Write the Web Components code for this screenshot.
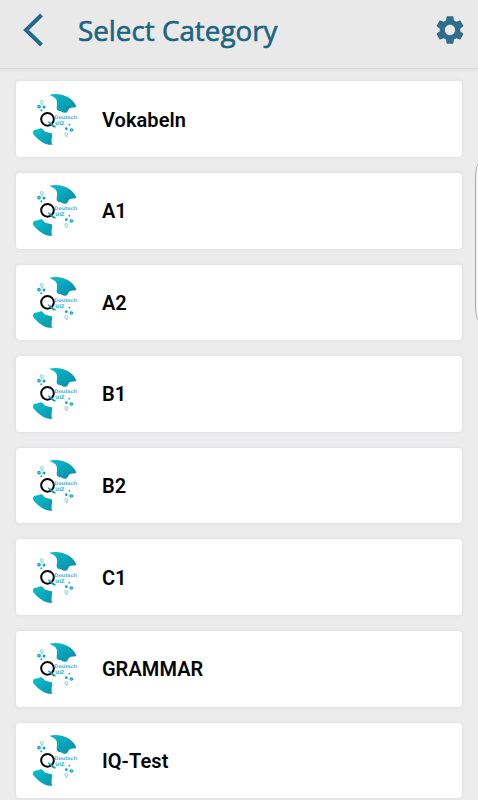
<!DOCTYPE html>
<html lang="de">
<head>
<meta charset="utf-8">
<title>Select Category</title>
<style>
html,body{margin:0;height:100%;overflow:hidden;background:#ececec}
</style>
</head>
<body>
<quiz-screen></quiz-screen>
<script>
const define = (name, html) => {
  const t = document.createElement('template');
  t.innerHTML = html;
  customElements.define(name, class extends HTMLElement {
    constructor() {
      super();
      this.attachShadow({ mode: 'open' }).append(t.content.cloneNode(true));
    }
  });
};

define('quiz-logo', `
<style>
:host{display:block;width:60px;height:65px;flex:none}
svg{display:block}
text{font-family:Roboto,sans-serif;text-rendering:geometricPrecision}
</style>
<svg width="60" height="65" viewBox="0 0 180 195">
  <defs>
    <linearGradient id="top" x1="0" y1="0" x2="1" y2="1"><stop offset="0" stop-color="#0cc0cc"/><stop offset="1" stop-color="#0888a6"/></linearGradient>
    <linearGradient id="low" x1="0" y1="0" x2="1" y2="1"><stop offset="0" stop-color="#08c2cb"/><stop offset="1" stop-color="#0a93ad"/></linearGradient>
  </defs>
  <path fill="url(#top)" d="M73 26C91 21 116 24 132 35C145 44 152 54 154 62C146 66 139 63 134 67C127 72 130 80 121 80C112 81 108 73 105 75C99 76 94 71 95 64C96 56 98 46 93 39C89 32 80 31 73 26Z"/>
  <path fill="url(#low)" d="M24 139C25 129 34 132 41 129C49 124 54 128 57 134C62 139 71 138 80 142C84 148 79 157 80 163C80 169 78 172 83 176C62 178 45 165 35 155C27 148 23 144 24 139Z"/>
  <g fill="#0ba5b7">
    <circle cx="42" cy="62" r="5.5"/><circle cx="57" cy="63" r="4.5"/><circle cx="49" cy="73" r="3"/>
    <circle cx="133" cy="116" r="2.5"/><circle cx="124" cy="128" r="4"/><circle cx="139" cy="132" r="5.5"/>
  </g>
  <g fill="#fff"><circle cx="42" cy="62" r="1.5"/><circle cx="139" cy="132" r="1.5"/></g>
  <g fill="none" stroke="#4ebfcb" stroke-width="2">
    <circle cx="50" cy="48" r="4.5"/><path d="M48 55h7M122 151h6"/><circle cx="124" cy="144" r="4.5"/>
  </g>
  <circle cx="67.500" cy="100" r="19" fill="none" stroke="#050505" stroke-width="6"/>
  <path d="M69 107L79 112L92 123L85 123L76 115Z" fill="#079bb4" stroke="#079bb4" stroke-width="2"/>
  <text x="88" y="97.500" font-weight="500" font-size="15" fill="#35a5e4" textLength="69" lengthAdjust="spacingAndGlyphs">Deutsch</text>
  <text x="91" y="116" font-weight="600" font-size="14.500" fill="#12a4b5" textLength="27" lengthAdjust="spacingAndGlyphs">UIZ</text>
</svg>`);

define('quiz-card', `
<style>
:host{display:flex;align-items:center;box-sizing:border-box;height:75.670px;padding:0 8.500px;background:#fff;border-radius:4px;
 box-shadow:0 0 3px 1px #dfe0e5;font:600 20px/24px Roboto,sans-serif;color:#050505}
quiz-logo{margin-top:-2px}
.label{margin-left:17px;padding-top:1px;letter-spacing:.08px}
</style>
<quiz-logo></quiz-logo><div class="label"><slot></slot></div>`);

define('quiz-header', `
<style>
:host{display:flex;align-items:center;box-sizing:border-box;height:69px;padding:0 14px 8px 23px;background:#e9e9e9;
 border-bottom:1px solid #dadada;box-shadow:0 1px 2px #dfdfdf;color:#1b6580}
svg{display:block;flex:none}
.gear{margin-right:-1px}
h1{margin:0 auto 0 34px;font:400 27.800px/36px "Open Sans",sans-serif;white-space:nowrap;-webkit-text-stroke:.6px #1b6580}
</style>
<svg width="21" height="34" viewBox="0 0 21 34"><path d="M18.500 2L3 17L18.500 32" fill="none" stroke="#226b88" stroke-width="4"/></svg>
<h1><slot></slot></h1>
<svg class="gear" width="30" height="30" viewBox="1.500 1.500 21 21"><path fill="#2f6e8a" d="M19.140 12.940c.04-.3.060-.61.060-.94 0-.32-.02-.64-.07-.94l2.030-1.580c.18-.14.23-.41.120-.61l-1.920-3.320c-.12-.22-.37-.29-.59-.22l-2.390.96c-.5-.38-1.030-.7-1.620-.94l-.36-2.540c-.04-.24-.24-.41-.48-.41h-3.840c-.24 0-.43.17-.47.41l-.36 2.540c-.59.24-1.130.57-1.620.94l-2.390-.96c-.22-.08-.47 0-.59.22L2.740 8.870c-.12.21-.08.47.120.61l2.030 1.580c-.05.3-.09.63-.09.94s.02.640.070.940l-2.030 1.580c-.18.14-.23.41-.12.610l1.920 3.320c.12.220.37.290.590.220l2.390-.96c.5.380 1.030.7 1.620.940l.36 2.540c.05.240.240.410.480.410h3.840c.24 0 .44-.17.470-.41l.36-2.540c.59-.24 1.130-.56 1.620-.94l2.390.96c.22.080.470 0 .59-.22l1.920-3.320c.12-.22.070-.47-.12-.61l-2.010-1.580zM12 15.600c-1.980 0-3.600-1.620-3.600-3.600s1.620-3.600 3.600-3.600 3.600 1.620 3.600 3.600-1.620 3.600-3.600 3.600z"/></svg>`);

define('edge-handle', `
<style>
:host{position:absolute;left:475px;top:163px;width:12px;height:158px;box-sizing:border-box;background:#f6f6f6;border:1px solid #a5a5a5;border-radius:4px/16px}
</style>`);

define('quiz-screen', `
<style>
:host{display:block;position:relative;width:478px;height:800px;overflow:hidden;background:#ececec}
main{display:flex;flex-direction:column;gap:16px;padding:12.200px 16px 0 16.400px}
</style>
<quiz-header>Select Category</quiz-header>
<main>
<quiz-card>Vokabeln</quiz-card><quiz-card>A1</quiz-card><quiz-card>A2</quiz-card><quiz-card>B1</quiz-card>
<quiz-card>B2</quiz-card><quiz-card>C1</quiz-card><quiz-card>GRAMMAR</quiz-card><quiz-card>IQ-Test</quiz-card>
</main>
<edge-handle></edge-handle>`);
</script>
</body>
</html>
